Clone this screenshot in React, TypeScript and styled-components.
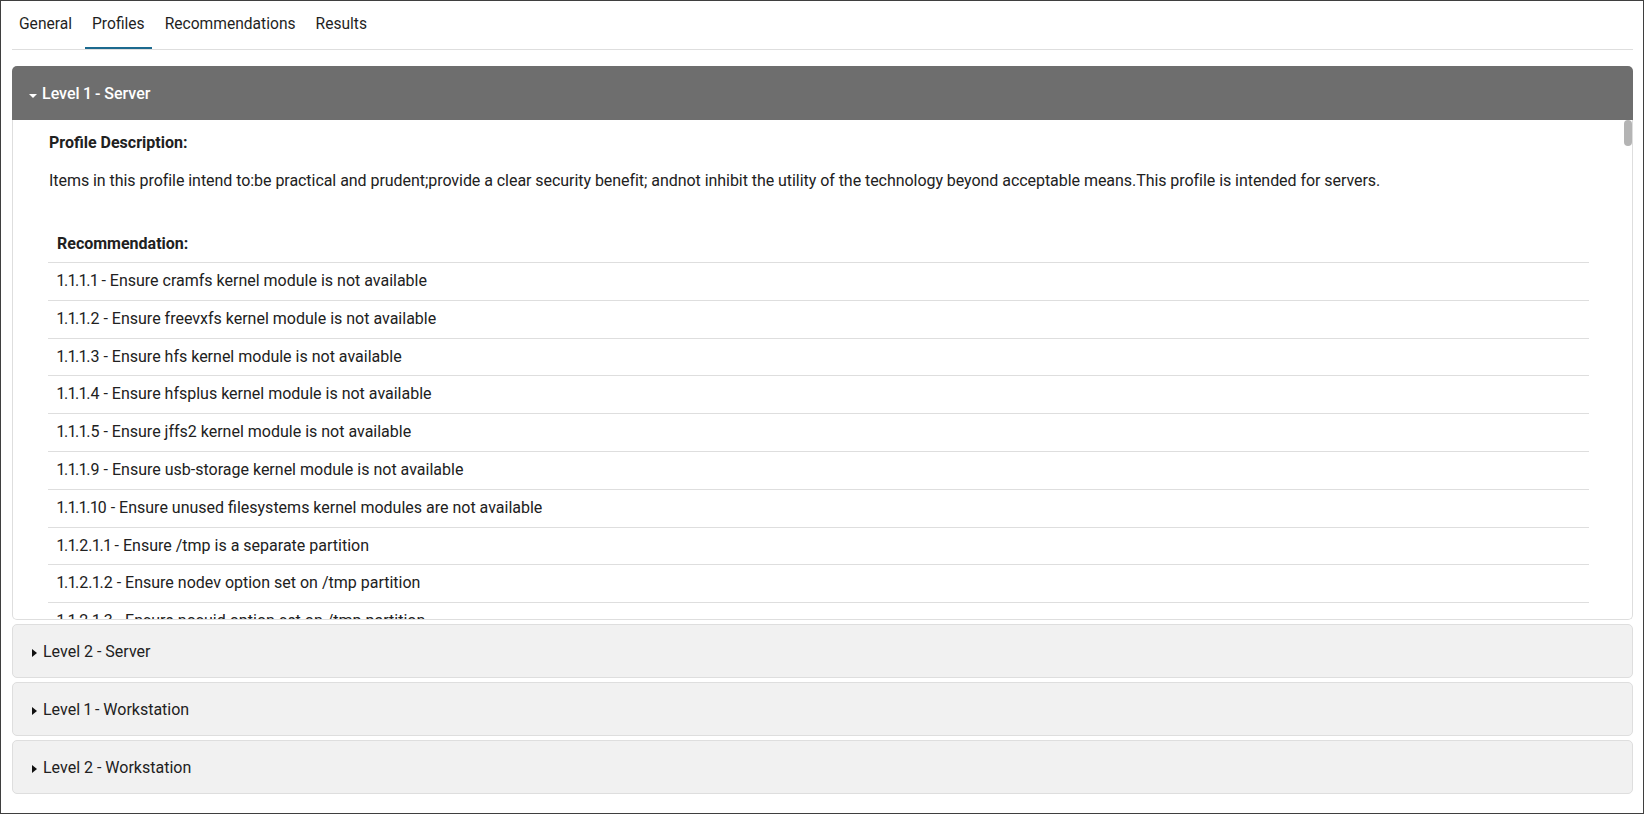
import React, { useState } from "react";
import styled, { createGlobalStyle } from "styled-components";

const GlobalStyle = createGlobalStyle`
  html, body {
    margin: 0;
    padding: 0;
    background: #ffffff;
  }
  body {
    font-family: Roboto, "Liberation Sans", Arial, sans-serif;
    font-variant-numeric: proportional-nums;
    font-feature-settings: "pnum" 1;
    color: #212121;
  }
  button {
    font-variant-numeric: inherit;
    font-feature-settings: inherit;
  }
  * {
    box-sizing: border-box;
  }
`;

const Frame = styled.div`
  width: 1644px;
  height: 814px;
  border: 1px solid #3f3f3f;
  padding: 0 10px 0 11px;
  display: flex;
  flex-direction: column;
  overflow: hidden;
`;

const TabBar = styled.nav`
  display: flex;
  gap: 6px;
  height: 49px;
  border-bottom: 1px solid #dedede;
  margin-bottom: 16px;
`;

const Tab = styled.button<{ $active?: boolean }>`
  font: inherit;
  font-size: 15.6px;
  color: #1f1f1f;
  background: none;
  border: none;
  padding: 0 7px;
  height: 48px;
  cursor: pointer;
  border-bottom: 2px solid ${({ $active }) => ($active ? "#1c6a8f" : "transparent")};
  display: flex;
  align-items: center;
`;

const Stack = styled.div`
  display: flex;
  flex-direction: column;
  gap: 4px;
`;

const Section = styled.section`
  display: flex;
  flex-direction: column;
`;

const SectionHeader = styled.button<{ $open?: boolean }>`
  font: inherit;
  font-size: 16px;
  text-align: left;
  height: 54px;
  display: flex;
  align-items: center;
  gap: 5px;
  padding: 0 0 0 ${({ $open }) => ($open ? "17px" : "19px")};
  cursor: pointer;
  border-radius: ${({ $open }) => ($open ? "5px 5px 0 0" : "5px")};
  background: ${({ $open }) => ($open ? "#6e6e6e" : "#f1f1f1")};
  color: ${({ $open }) => ($open ? "#ffffff" : "#212121")};
  font-weight: ${({ $open }) => ($open ? 500 : 400)};
  border: ${({ $open }) => ($open ? "none" : "1px solid #dedede")};
`;

const CaretDown = styled.span`
  width: 0;
  height: 0;
  border-left: 4px solid transparent;
  border-right: 4px solid transparent;
  border-top: 4px solid #ffffff;
  margin-top: 5px;
`;

const CaretRight = styled.span`
  width: 0;
  height: 0;
  border-top: 4px solid transparent;
  border-bottom: 4px solid transparent;
  border-left: 5px solid #111111;
  margin-top: 4px;
  margin-right: 1px;
`;

const BodyWrap = styled.div`
  position: relative;
  height: 500px;
  border: 1px solid #dedede;
  border-top: none;
  border-radius: 0 0 5px 5px;
  overflow: hidden;
`;

const Body = styled.div`
  height: 100%;
  overflow-y: scroll;
  padding: 11px 43px 20px 35px;
  scrollbar-width: none;

  &::-webkit-scrollbar {
    display: none;
  }
`;

const ScrollThumb = styled.div`
  position: absolute;
  right: 0;
  width: 8px;
  height: 26px;
  border-radius: 4px;
  background: #b4b4b4;
  pointer-events: none;
`;

const Heading = styled.h4`
  margin: 0 0 14px 1px;
  font-size: 16px;
  font-weight: 700;
  line-height: 24px;
`;

const Description = styled.p`
  margin: 0 0 32px 1px;
  font-size: 16px;
  line-height: 24px;
  letter-spacing: -0.05px;
`;

const Table = styled.table`
  width: 100%;
  border-collapse: collapse;
  font-size: 16px;
`;

const Th = styled.th`
  text-align: left;
  font-weight: 700;
  padding: 8px 9px;
  line-height: 21px;
  border-bottom: 1px solid #dedede;
`;

const Td = styled.td`
  padding: 8px 9px;
  line-height: 20.8px;
  border-bottom: 1px solid #dedede;
`;

const recommendations = [
  "1.1.1.1 - Ensure cramfs kernel module is not available",
  "1.1.1.2 - Ensure freevxfs kernel module is not available",
  "1.1.1.3 - Ensure hfs kernel module is not available",
  "1.1.1.4 - Ensure hfsplus kernel module is not available",
  "1.1.1.5 - Ensure jffs2 kernel module is not available",
  "1.1.1.9 - Ensure usb-storage kernel module is not available",
  "1.1.1.10 - Ensure unused filesystems kernel modules are not available",
  "1.1.2.1.1 - Ensure /tmp is a separate partition",
  "1.1.2.1.2 - Ensure nodev option set on /tmp partition",
  "1.1.2.1.3 - Ensure nosuid option set on /tmp partition",
  "1.1.2.1.4 - Ensure noexec option set on /tmp partition",
  "1.1.2.2.1 - Ensure /dev/shm is a separate partition",
  "1.1.2.2.2 - Ensure nodev option set on /dev/shm partition",
  "1.1.2.2.3 - Ensure nosuid option set on /dev/shm partition",
  "1.1.2.2.4 - Ensure noexec option set on /dev/shm partition",
  "1.1.2.3.2 - Ensure nodev option set on /home partition",
  "1.1.2.3.3 - Ensure nosuid option set on /home partition",
  "1.1.2.4.2 - Ensure nodev option set on /var partition",
  "1.1.2.4.3 - Ensure nosuid option set on /var partition",
  "1.1.2.5.2 - Ensure nodev option set on /var/tmp partition",
  "1.1.2.5.3 - Ensure nosuid option set on /var/tmp partition",
  "1.1.2.5.4 - Ensure noexec option set on /var/tmp partition",
  "1.1.2.6.2 - Ensure nodev option set on /var/log partition",
  "1.1.2.6.3 - Ensure nosuid option set on /var/log partition",
  "1.1.2.6.4 - Ensure noexec option set on /var/log partition",
  "1.1.2.7.2 - Ensure nodev option set on /var/log/audit partition",
  "1.1.2.7.3 - Ensure nosuid option set on /var/log/audit partition",
  "1.1.2.7.4 - Ensure noexec option set on /var/log/audit partition",
  "1.2.1.2 - Ensure package manager repositories are configured",
  "1.2.2.1 - Ensure updates, patches, and additional security software are installed",
  "1.3.1.1 - Ensure AppArmor is installed",
  "1.3.1.2 - Ensure AppArmor is enabled in the bootloader configuration",
  "1.3.1.3 - Ensure all AppArmor Profiles are in enforce or complain mode",
  "1.4.1 - Ensure bootloader password is set",
  "1.4.2 - Ensure access to bootloader config is configured",
  "1.5.1 - Ensure address space layout randomization is enabled",
  "1.5.2 - Ensure ptrace_scope is restricted",
  "1.5.3 - Ensure core dumps are restricted",
  "1.5.4 - Ensure prelink is not installed",
  "1.5.5 - Ensure Automatic Error Reporting is not enabled",
  "1.6.1 - Ensure message of the day is configured properly",
  "1.6.2 - Ensure local login warning banner is configured properly",
  "1.6.3 - Ensure remote login warning banner is configured properly",
  "1.6.4 - Ensure access to /etc/motd is configured",
  "1.6.5 - Ensure access to /etc/issue is configured",
  "1.6.6 - Ensure access to /etc/issue.net is configured",
  "1.7.2 - Ensure GDM login banner is configured",
  "1.7.3 - Ensure GDM disable-user-list option is enabled",
  "1.7.4 - Ensure GDM screen locks when the user is idle",
  "1.7.10 - Ensure XDMCP is not enabled",
  "2.1.1 - Ensure autofs services are not in use",
  "2.1.2 - Ensure avahi daemon services are not in use",
  "2.1.3 - Ensure dhcp server services are not in use",
  "2.1.4 - Ensure dns server services are not in use",
  "2.1.5 - Ensure dnsmasq services are not in use",
  "2.1.6 - Ensure ftp server services are not in use",
  "2.1.7 - Ensure ldap server services are not in use",
  "2.1.8 - Ensure message access server services are not in use",
  "2.1.9 - Ensure network file system services are not in use",
  "2.1.10 - Ensure nis server services are not in use",
  "2.1.11 - Ensure print server services are not in use",
  "2.1.12 - Ensure rpcbind services are not in use",
  "2.1.13 - Ensure rsync services are not in use",
  "2.1.14 - Ensure samba file server services are not in use",
  "2.1.15 - Ensure snmp services are not in use",
  "2.1.16 - Ensure tftp server services are not in use",
  "2.1.17 - Ensure web proxy server services are not in use",
  "2.1.18 - Ensure web server services are not in use",
  "2.1.19 - Ensure xinetd services are not in use",
  "2.1.21 - Ensure mail transfer agent is configured for local-only mode",
  "2.1.22 - Ensure only approved services are listening on a network interface",
  "2.2.1 - Ensure NIS Client is not installed",
  "2.2.2 - Ensure rsh client is not installed",
  "2.2.3 - Ensure talk client is not installed",
  "2.2.4 - Ensure telnet client is not installed",
  "2.2.5 - Ensure ldap client is not installed",
  "2.2.6 - Ensure ftp client is not installed",
  "2.3.1.1 - Ensure a single time synchronization daemon is in use",
  "2.3.2.1 - Ensure systemd-timesyncd configured with authorized timeserver",
  "2.3.2.2 - Ensure systemd-timesyncd is enabled and running",
  "2.4.1.1 - Ensure cron daemon is enabled and active",
  "2.4.1.2 - Ensure permissions on /etc/crontab are configured",
  "2.4.1.3 - Ensure permissions on /etc/cron.hourly are configured",
  "2.4.1.4 - Ensure permissions on /etc/cron.daily are configured",
  "2.4.1.5 - Ensure permissions on /etc/cron.weekly are configured",
  "2.4.1.6 - Ensure permissions on /etc/cron.monthly are configured",
  "2.4.1.7 - Ensure permissions on /etc/cron.d are configured",
  "2.4.1.8 - Ensure crontab is restricted to authorized users",
  "2.4.2.1 - Ensure at is restricted to authorized users",
  "3.1.1 - Ensure IPv6 status is identified",
  "3.1.3 - Ensure bluetooth services are not in use",
  "3.2.1 - Ensure dccp kernel module is not available",
  "3.2.2 - Ensure tipc kernel module is not available",
  "3.2.3 - Ensure rds kernel module is not available",
  "3.2.4 - Ensure sctp kernel module is not available",
  "3.3.1 - Ensure ip forwarding is disabled",
  "3.3.2 - Ensure packet redirect sending is disabled",
  "3.3.3 - Ensure bogus icmp responses are ignored",
  "3.3.4 - Ensure broadcast icmp requests are ignored",
  "3.3.5 - Ensure icmp redirects are not accepted",
  "3.3.6 - Ensure secure icmp redirects are not accepted",
  "3.3.7 - Ensure reverse path filtering is enabled",
  "3.3.8 - Ensure source routed packets are not accepted",
  "3.3.9 - Ensure suspicious packets are logged",
  "3.3.10 - Ensure tcp syn cookies is enabled",
  "3.3.11 - Ensure ipv6 router advertisements are not accepted",
  "4.1.1 - Ensure ufw is installed",
  "4.1.2 - Ensure iptables-persistent is not installed with ufw",
  "4.1.3 - Ensure ufw service is enabled",
  "4.1.4 - Ensure ufw loopback traffic is configured",
  "4.1.6 - Ensure ufw firewall rules exist for all open ports",
  "4.1.7 - Ensure ufw default deny firewall policy",
  "5.1.1 - Ensure permissions on /etc/ssh/sshd_config are configured",
  "5.1.2 - Ensure permissions on SSH private host key files are configured",
  "5.1.3 - Ensure permissions on SSH public host key files are configured",
  "5.1.4 - Ensure sshd access is configured",
  "5.1.5 - Ensure sshd Banner is configured",
  "5.1.6 - Ensure sshd Ciphers are configured",
  "5.1.7 - Ensure sshd ClientAliveInterval and ClientAliveCountMax are configured",
  "5.1.9 - Ensure sshd HostbasedAuthentication is disabled",
  "5.1.10 - Ensure sshd IgnoreRhosts is enabled",
  "5.1.11 - Ensure sshd KexAlgorithms is configured",
  "5.1.12 - Ensure sshd LoginGraceTime is configured",
  "5.1.13 - Ensure sshd LogLevel is configured",
  "5.1.14 - Ensure sshd MACs are configured",
  "5.1.15 - Ensure sshd MaxAuthTries is configured",
  "5.1.16 - Ensure sshd MaxSessions is configured",
  "5.1.17 - Ensure sshd MaxStartups is configured",
  "5.1.18 - Ensure sshd PermitEmptyPasswords is disabled",
  "5.1.19 - Ensure sshd PermitRootLogin is disabled",
  "5.1.20 - Ensure sshd PermitUserEnvironment is disabled",
  "5.1.21 - Ensure sshd UsePAM is enabled",
  "5.2.1 - Ensure sudo is installed",
  "5.2.2 - Ensure sudo commands use pty",
  "5.2.3 - Ensure sudo log file exists",
  "5.2.5 - Ensure re-authentication for privilege escalation is not disabled globally",
  "5.2.6 - Ensure sudo authentication timeout is configured correctly",
  "5.2.7 - Ensure access to the su command is restricted",
  "5.3.1.1 - Ensure latest version of pam is installed",
  "5.3.1.2 - Ensure libpam-modules is installed",
  "5.3.1.3 - Ensure libpam-pwquality is installed",
  "5.3.2.1 - Ensure pam_unix module is enabled",
  "5.3.2.2 - Ensure pam_faillock module is enabled",
  "5.3.2.3 - Ensure pam_pwquality module is enabled",
  "5.3.2.4 - Ensure pam_pwhistory module is enabled",
  "5.3.3.1.1 - Ensure password failed attempts lockout is configured",
  "5.3.3.1.2 - Ensure password unlock time is configured",
  "5.3.3.2.1 - Ensure password number of changed characters is configured",
  "5.3.3.2.2 - Ensure minimum password length is configured",
  "5.3.3.2.3 - Ensure password complexity is configured",
  "5.3.3.2.4 - Ensure password same consecutive characters is configured",
  "5.3.3.2.5 - Ensure password maximum sequential characters is configured",
  "5.3.3.2.6 - Ensure password dictionary check is enabled",
  "5.3.3.2.7 - Ensure password quality checking is enforced",
  "5.3.3.2.8 - Ensure password quality is enforced for the root user",
  "5.3.3.3.1 - Ensure password history remember is configured",
  "5.3.3.3.2 - Ensure password history is enforced for the root user",
  "5.3.3.3.3 - Ensure pam_pwhistory includes use_authtok",
  "5.3.3.4.1 - Ensure pam_unix does not include nullok",
  "5.3.3.4.2 - Ensure pam_unix does not include remember",
  "5.3.3.4.3 - Ensure pam_unix includes a strong password hashing algorithm",
  "5.3.3.4.4 - Ensure pam_unix includes use_authtok",
  "5.4.1.1 - Ensure password expiration is configured",
  "5.4.1.3 - Ensure password expiration warning days is configured",
  "5.4.1.4 - Ensure strong password hashing algorithm is configured",
  "5.4.1.5 - Ensure inactive password lock is configured",
  "5.4.1.6 - Ensure all users last password change date is in the past",
  "5.4.2.1 - Ensure root is the only UID 0 account",
  "5.4.2.2 - Ensure root is the only GID 0 account",
  "5.4.2.3 - Ensure group root is the only GID 0 group",
  "5.4.2.4 - Ensure root account access is controlled",
  "5.4.2.5 - Ensure root path integrity",
  "5.4.2.6 - Ensure root user umask is configured",
  "5.4.2.7 - Ensure system accounts do not have a valid login shell",
  "5.4.2.8 - Ensure accounts without a valid login shell are locked",
  "5.4.3.2 - Ensure default user shell timeout is configured",
  "5.4.3.3 - Ensure default user umask is configured",
  "6.1.1 - Ensure AIDE is installed",
  "6.1.2 - Ensure filesystem integrity is regularly checked",
  "6.2.1.1.1 - Ensure journald service is enabled and active",
  "6.2.1.1.2 - Ensure journald log file access is configured",
  "6.2.1.1.3 - Ensure journald log file rotation is configured",
  "6.2.1.1.4 - Ensure journald ForwardToSyslog is disabled",
  "6.2.1.1.5 - Ensure journald Storage is configured",
  "6.2.1.1.6 - Ensure journald Compress is configured",
  "6.2.2.1 - Ensure access to all logfiles has been configured",
  "7.1.1 - Ensure permissions on /etc/passwd are configured",
  "7.1.2 - Ensure permissions on /etc/passwd- are configured",
  "7.1.3 - Ensure permissions on /etc/group are configured",
  "7.1.4 - Ensure permissions on /etc/group- are configured",
  "7.1.5 - Ensure permissions on /etc/shadow are configured",
  "7.1.6 - Ensure permissions on /etc/shadow- are configured",
  "7.1.7 - Ensure permissions on /etc/gshadow are configured",
  "7.1.8 - Ensure permissions on /etc/gshadow- are configured",
  "7.1.9 - Ensure permissions on /etc/shells are configured",
  "7.1.10 - Ensure permissions on /etc/security/opasswd are configured",
  "7.1.11 - Ensure world writable files and directories are secured",
  "7.1.12 - Ensure no files or directories without an owner and a group exist",
  "7.1.13 - Ensure SUID and SGID files are reviewed",
  "7.2.1 - Ensure accounts in /etc/passwd use shadowed passwords",
  "7.2.2 - Ensure /etc/shadow password fields are not empty",
  "7.2.3 - Ensure all groups in /etc/passwd exist in /etc/group",
  "7.2.4 - Ensure shadow group is empty",
  "7.2.5 - Ensure no duplicate UIDs exist",
  "7.2.6 - Ensure no duplicate GIDs exist",
  "7.2.7 - Ensure no duplicate user names exist",
  "7.2.8 - Ensure no duplicate group names exist",
  "7.2.9 - Ensure local interactive user home directories are configured",
  "7.2.10 - Ensure local interactive user dot files access is configured",
];

const tabs = ["General", "Profiles", "Recommendations", "Results"];

const profiles = [
  "Level 1 - Server",
  "Level 2 - Server",
  "Level 1 - Workstation",
  "Level 2 - Workstation",
];

function ProfileBody() {
  // thumb position follows the scroll offset of the body
  const [thumbTop, setThumbTop] = useState(0);

  const onScroll = (e: React.UIEvent<HTMLDivElement>) => {
    const el = e.currentTarget;
    const max = el.scrollHeight - el.clientHeight;
    const track = el.clientHeight - 26;
    setThumbTop(max > 0 ? (el.scrollTop / max) * track : 0);
  };

  return (
    <BodyWrap>
      <Body onScroll={onScroll}>
        <Heading>Profile Description:</Heading>
        <Description>
          Items in this profile intend to:be practical and prudent;provide a clear security
          benefit; andnot inhibit the utility of the technology beyond acceptable means.This
          profile is intended for servers.
        </Description>
        <Table>
          <thead>
            <tr>
              <Th>Recommendation:</Th>
            </tr>
          </thead>
          <tbody>
            {recommendations.map((r) => (
              <tr key={r}>
                <Td>{r}</Td>
              </tr>
            ))}
          </tbody>
        </Table>
      </Body>
      <ScrollThumb style={{ top: thumbTop }} />
    </BodyWrap>
  );
}

export default function App() {
  const [activeTab, setActiveTab] = useState("Profiles");
  const [open, setOpen] = useState<string | null>("Level 1 - Server");

  return (
    <>
      <GlobalStyle />
      <Frame>
        <TabBar>
          {tabs.map((t) => (
            <Tab key={t} $active={t === activeTab} onClick={() => setActiveTab(t)}>
              {t}
            </Tab>
          ))}
        </TabBar>

        <Stack>
          {profiles.map((p) => {
            const isOpen = p === open;
            return (
              <Section key={p}>
                <SectionHeader $open={isOpen} onClick={() => setOpen(isOpen ? null : p)}>
                  {isOpen ? <CaretDown /> : <CaretRight />}
                  {p}
                </SectionHeader>
                {isOpen && <ProfileBody />}
              </Section>
            );
          })}
        </Stack>
      </Frame>
    </>
  );
}
